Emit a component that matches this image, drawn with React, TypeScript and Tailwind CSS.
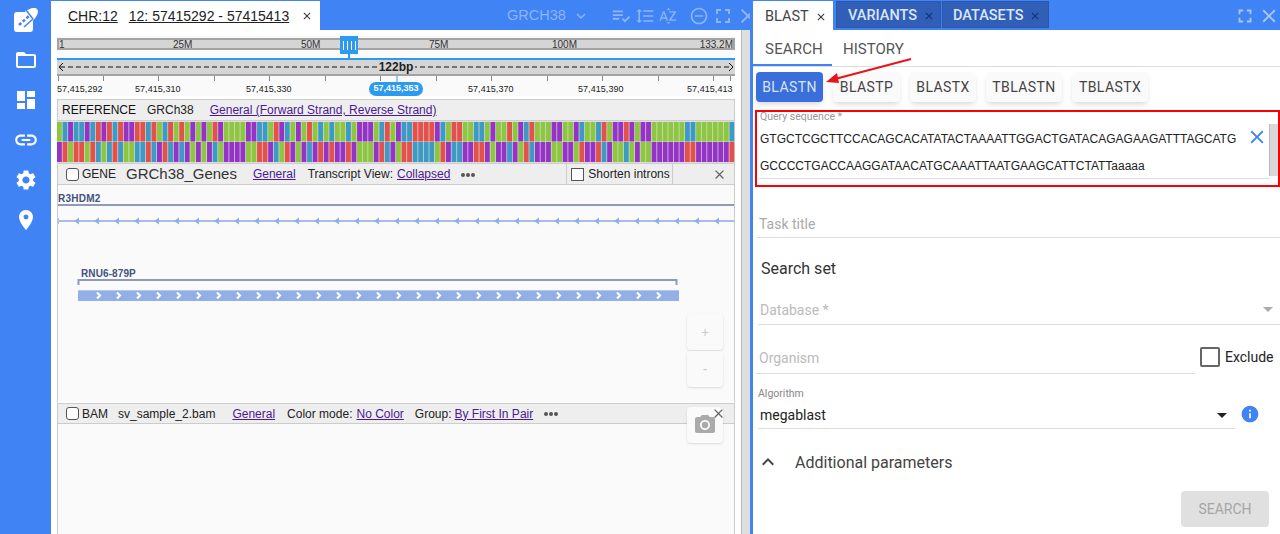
import {
  MdClose,
  MdDashboard,
  MdExpandLess,
  MdExpandMore,
  MdFolderOpen,
  MdFormatLineSpacing,
  MdFullscreen,
  MdInfo,
  MdLink,
  MdLocationOn,
  MdPhotoCamera,
  MdPlaylistAddCheck,
  MdRemoveCircleOutline,
  MdSettings,
  MdSortByAlpha,
} from "react-icons/md";

// top strand as read off the reference track, g/b/p/r
const STRAND =
  "gbpbbpbrprbrpprrbrgbrg" +
  "rgpgpgrpggggppbbgrpbgpgrgbgbggbgpp" +
  "pgbrgpbbrrrrpbgrrggbbgpggrgpbrgggp" +
  "pggpbggbrgpprpgppggggggbbggggggbg";

const BASE: Record<string, string> = {
  g: "#8dc63f",
  b: "#3d9ac4",
  p: "#9433c6",
  r: "#e4504a",
};
const COMPLEMENT: Record<string, string> = { g: "p", p: "g", b: "r", r: "b" };

const TICKS = [1, 46, 101, 157, 212, 268, 323, 379, 434, 490, 545, 601, 656, 673];
const RULER_LABELS = [
  { text: "57,415,292", left: 0 },
  { text: "57,415,310", left: 78 },
  { text: "57,415,330", left: 189 },
  { text: "57,415,370", left: 411 },
  { text: "57,415,390", left: 521 },
  { text: "57,415,413", left: 630 },
];
const MINIMAP_LABELS = [
  { text: "25M", left: 114 },
  { text: "50M", left: 242 },
  { text: "75M", left: 370 },
  { text: "100M", left: 493 },
];

const linkClass = "text-[#4a1a92] underline";

function Logo() {
  return (
    <svg width="24" height="24" viewBox="0 0 24 24" className="mt-[8px]">
      <rect x="0" y="4" width="19" height="20" rx="3" fill="#fff" />
      <path d="M11 3 L18 0 Q23 -1 24 3 Q24 6 22 9 L17 15 Z" fill="#fff" />
      <path d="M12 2 L19 11" stroke="#3f83f5" strokeWidth="1.5" />
      <path d="M5 17 L15 8" stroke="#3f83f5" strokeWidth="2.5" strokeDasharray="3 2" />
      <path d="M10 19 L19 11" stroke="#3f83f5" strokeWidth="1.5" />
    </svg>
  );
}

function Sidebar() {
  return (
    <aside className="flex w-[51px] shrink-0 flex-col items-center bg-[#3f83f5] text-white">
      <Logo />
      <MdFolderOpen size={24} className="mt-[16px]" />
      <MdDashboard size={24} className="mt-[16px]" />
      <MdLink size={26} className="mt-[15px]" />
      <MdSettings size={24} className="mt-[15px]" />
      <MdLocationOn size={24} className="mt-[16px]" />
    </aside>
  );
}

function LeftHeader() {
  return (
    <div className="flex h-[30px] shrink-0 items-end bg-[#3f83f5] pt-px">
      <div className="flex h-[29px] w-[269px] shrink-0 items-center whitespace-nowrap bg-white pl-[17px] text-sm text-[#222]">
        <span className="underline">CHR:12</span>
        <span className="ml-[11px] underline">12: 57415292 - 57415413</span>
        <MdClose size={12} className="ml-[12px] text-[#333]" />
      </div>
      <div className="flex h-[29px] min-w-0 flex-1 items-center pl-[187px] text-[#8db5f8]">
        <span className="text-[14.5px]">GRCH38</span>
        <MdExpandMore size={18} className="ml-[6px] shrink-0" />
        <MdPlaylistAddCheck size={22} className="ml-[20px] shrink-0" />
        <MdFormatLineSpacing size={20} className="ml-[3px] shrink-0" />
        <MdSortByAlpha size={20} className="ml-[3px] shrink-0" />
        <MdRemoveCircleOutline size={20} className="ml-[11px] shrink-0" />
        <MdFullscreen size={24} className="ml-[2px] shrink-0" />
        <MdClose size={24} className="ml-[1px] shrink-0" />
      </div>
    </div>
  );
}

function Minimap() {
  return (
    <div className="relative h-[22px] bg-[#fafafa]">
      <div className="absolute left-0 right-0 top-[2px] h-[12px] border-2 border-[#a3a3a3] bg-[#d5d5d5] text-[10px] leading-[9px] text-[#333]">
        <span className="absolute left-0">1</span>
        {MINIMAP_LABELS.map((l) => (
          <span key={l.text} className="absolute" style={{ left: l.left }}>
            {l.text}
          </span>
        ))}
        <span className="absolute right-0">133.2M</span>
      </div>
      <div className="absolute left-[283px] top-0 flex h-[18px] w-[18px] items-center justify-center gap-[3px] bg-[#2a9bf0]">
        <i className="h-[9px] w-px bg-white" />
        <i className="h-[9px] w-px bg-white" />
        <i className="h-[9px] w-px bg-white" />
        <i className="h-[9px] w-px bg-white" />
      </div>
      <div className="absolute left-[291px] top-[18px] h-[4px] w-[2px] bg-[#2a9bf0]" />
    </div>
  );
}

function Ruler() {
  return (
    <div className="bg-[#fafafa]">
      <div className="h-[2px] bg-[#2a9bf0]" />
      <div className="relative flex h-[16px] items-center border-b-2 border-[#a3a3a3] bg-[#d5d5d5]">
        <svg width="678" height="14" className="absolute left-0 top-0">
          <line x1="3" y1="7" x2="675" y2="7" stroke="#111" strokeDasharray="5 3" />
          <path d="M6 3 L2 7 L6 11 M672 3 L676 7 L672 11" fill="none" stroke="#111" />
        </svg>
        <span className="relative mx-auto -mt-[1px] bg-[#d5d5d5] px-[2px] text-xs font-bold leading-none text-[#222]">
          122bp
        </span>
      </div>
      <div className="relative h-[20px]">
        <svg width="678" height="6" className="absolute left-0 top-0">
          {TICKS.map((x) => (
            <line key={x} x1={x + 0.5} y1="0" x2={x + 0.5} y2="5" stroke="#888" />
          ))}
          <line x1="340" y1="0" x2="340" y2="6" stroke="#2a9bf0" />
        </svg>
        {RULER_LABELS.map((l) => (
          <span
            key={l.text}
            className="absolute top-[7px] text-[9px] leading-[13px] tracking-[0.05px] text-[#222]"
            style={{ left: l.left }}
          >
            {l.text}
          </span>
        ))}
        <span className="absolute left-[312px] top-[6px] flex h-[14px] w-[54px] items-center justify-center rounded-full bg-[#2a9bf0] text-[9px] font-bold text-white">
          57,415,353
        </span>
      </div>
    </div>
  );
}

function ReferenceTrack() {
  const cell = 678 / 122;
  return (
    <div className="mt-[3px]">
      <div className="flex h-[22px] items-center gap-[11px] border border-[#ccc] bg-[#eee] pl-[4px] text-xs text-[#111]">
        <span>REFERENCE</span>
        <span className="text-[#222]">GRCh38</span>
        <span className={`ml-[5px] ${linkClass}`}>General (Forward Strand, Reverse Strand)</span>
      </div>
      <svg width="678" height="42" className="block bg-[#ddd]">
        {STRAND.split("").map((b, i) => (
          <g key={i}>
            <rect x={i * cell} y="1" width={cell - 0.7} height="19.5" fill={BASE[b]} />
            <rect x={i * cell} y="21" width={cell - 0.7} height="20" fill={BASE[COMPLEMENT[b]]} />
          </g>
        ))}
      </svg>
    </div>
  );
}

function SmallCheckbox({ square }: { square?: boolean }) {
  return (
    <span
      className={`block h-[13px] w-[13px] shrink-0 border border-[#555] bg-white ${square ? "" : "rounded-[3px]"}`}
    />
  );
}

function Dots() {
  return (
    <span className="flex w-[14px] justify-between">
      <i className="h-[4px] w-[4px] rounded-full bg-[#555]" />
      <i className="h-[4px] w-[4px] rounded-full bg-[#555]" />
      <i className="h-[4px] w-[4px] rounded-full bg-[#555]" />
    </span>
  );
}

function GeneHeader() {
  return (
    <div className="flex h-[22px] items-center border border-[#ccc] bg-[#eee] text-xs text-[#222]">
      <span className="ml-[8px]">
        <SmallCheckbox />
      </span>
      <span className="ml-[3px]">GENE</span>
      <span className="ml-[10px] text-[15px] text-[#333]">GRCh38_Genes</span>
      <span className={`ml-[16px] ${linkClass}`}>General</span>
      <span className="ml-[12px]">Transcript View:</span>
      <span className={`ml-[4px] ${linkClass}`}>Collapsed</span>
      <span className="ml-[11px] mt-[1px]">
        <Dots />
      </span>
      <div className="ml-[91px] flex h-full w-[107px] items-center gap-[4px] border-x border-[#ccc] pl-[4px]">
        <SmallCheckbox square />
        <span>Shorten introns</span>
      </div>
      <MdClose size={15} className="ml-[39px] text-[#666]" />
    </div>
  );
}

function GeneTrack() {
  const intronMarks = Array.from({ length: 33 }, (_, i) => 19 + i * 20);
  const chevrons = Array.from({ length: 29 }, (_, i) => 41 + i * 20);
  return (
    <div className="relative h-[217px] border-x border-[#ccc] bg-[#fafafa]">
      <svg width="676" height="217" className="absolute left-0 top-0">
        <rect x="0" y="19" width="676" height="2" fill="#8e9bb8" />
        <rect x="0" y="35" width="676" height="2" fill="#a6bdea" />
        <rect x="0" y="33" width="1" height="6" fill="#a6bdea" />
        {intronMarks.map((x) => (
          <path key={x} d={`M${x - 3} 36 L${x + 2} 32.5 L${x + 2} 39.5 Z`} fill="#94afe6" />
        ))}
        <path d="M20.5 100 V95 H618.5 V100" fill="none" stroke="#8e9bb8" strokeWidth="2" />
        <rect x="20" y="105" width="601" height="11" fill="#93afe6" />
        <rect x="20" y="105" width="601" height="1" fill="#b4c8ef" />
        {chevrons.map((x) => (
          <path key={x} d={`M${x - 2} 107.5 L${x + 1} 110.5 L${x - 2} 113.5`} fill="none" stroke="#fff" strokeWidth="2" />
        ))}
      </svg>
      <span className="absolute left-0 top-[8px] text-[10px] font-bold leading-[12px] tracking-[0.25px] text-[#41527f]">
        R3HDM2
      </span>
      <span className="absolute left-[23px] top-[83px] text-[10px] font-bold leading-[12px] tracking-[0.1px] text-[#41527f]">
        RNU6-879P
      </span>
      <button className="absolute left-[629px] top-[129px] h-[36px] w-[36px] rounded bg-[#fafafa] text-sm text-[#ccc] shadow-sm">
        +
      </button>
      <button className="absolute left-[629px] top-[166px] h-[36px] w-[36px] rounded bg-[#fafafa] text-sm text-[#ccc] shadow-sm">
        -
      </button>
    </div>
  );
}

function BamTrack() {
  return (
    <div className="relative mt-px flex flex-1 flex-col">
      <div className="flex h-[21px] items-center border border-[#ccc] bg-[#eee] text-xs text-[#222]">
        <span className="ml-[8px]">
          <SmallCheckbox />
        </span>
        <span className="ml-[3px]">BAM</span>
        <span className="ml-[10px]">sv_sample_2.bam</span>
        <span className={`ml-[17px] ${linkClass}`}>General</span>
        <span className="ml-[12px]">Color mode:</span>
        <span className={`ml-[4px] ${linkClass}`}>No Color</span>
        <span className="ml-[11px]">Group:</span>
        <span className={`ml-[3px] ${linkClass}`}>By First In Pair</span>
        <span className="ml-[11px] mt-[1px]">
          <Dots />
        </span>
      </div>
      <div className="flex-1 border-x border-[#ccc] bg-[#fafafa]" />
      <button className="absolute left-[630px] top-[4px] flex h-[36px] w-[36px] items-center justify-center rounded bg-[#fafafa] shadow-sm">
        <MdPhotoCamera size={24} className="text-[#aaa]" />
      </button>
      <MdClose size={15} className="absolute left-[654px] top-[3px] text-[#666]" />
    </div>
  );
}

function LeftPanel() {
  return (
    <section className="flex w-[699px] shrink-0 flex-col font-['Liberation_Sans',Arial,sans-serif]">
      <LeftHeader />
      <div className="flex min-h-0 flex-1 bg-white">
        <div className="ml-[6px] mt-[6px] flex w-[678px] flex-col">
          <Minimap />
          <Ruler />
          <ReferenceTrack />
          <GeneHeader />
          <GeneTrack />
          <BamTrack />
        </div>
        <div className="ml-[6px] w-[9px] border-l border-[#bbb] bg-[#dedede]" />
      </div>
    </section>
  );
}

function RightHeader() {
  return (
    <div className="flex h-[30px] shrink-0 items-end bg-[#3f83f5] pl-[3px] pt-px">
      <div className="flex h-[29px] w-[80px] items-center bg-white pl-[12px] pt-[2px] text-[14.5px] text-[#444]">
        BLAST
        <MdClose size={12} className="ml-[6px] text-[#333]" />
      </div>
      <div className="ml-[3px] flex h-[27px] w-[105px] items-center self-start border border-[#2a57ad] bg-[#315fb8] pl-[11px] pt-[3px] text-[14.5px] font-medium text-[#dbe6f8]">
        VARIANTS
        <MdClose size={12} className="ml-[6px] text-[#10306e]" />
      </div>
      <div className="ml-[1px] flex h-[27px] w-[107px] items-center self-start border border-[#2a57ad] bg-[#315fb8] pl-[10px] pt-[3px] text-[14.5px] font-medium text-[#dbe6f8]">
        DATASETS
        <MdClose size={12} className="ml-[6px] text-[#10306e]" />
      </div>
      <div className="ml-auto flex h-[29px] items-center text-[#a9c7fa]">
        <MdFullscreen size={22} />
        <MdClose size={22} className="ml-[2px]" />
      </div>
    </div>
  );
}

const ALGO_BUTTONS = [
  { label: "BLASTN", width: "w-[67px]", active: true },
  { label: "BLASTP", width: "w-[67px]" },
  { label: "BLASTX", width: "w-[66px]" },
  { label: "TBLASTN", width: "w-[76px]" },
  { label: "TBLASTX", width: "w-[76px]" },
];

function RightPanel() {
  return (
    <section className="relative flex min-w-0 flex-1 flex-col border-l-[3px] border-[#3f83f5] font-['Roboto',Arial,sans-serif]">
      <div className="-ml-[3px]">
        <RightHeader />
      </div>
      <div className="flex h-[37px] items-end border-b border-[#ddd]">
        <div className="flex h-[36px] w-[79px] items-center justify-center border-b-2 border-[#3f83f5] pl-[3px] pt-[4px] text-[15px] tracking-[0.15px] text-[#555]">
          SEARCH
        </div>
        <div className="ml-[11px] flex h-[36px] items-center pt-[2px] text-[15px] text-[#555]">HISTORY</div>
      </div>
      <div className="ml-[3px] mt-[5px] flex gap-[10px]">
        {ALGO_BUTTONS.map((b) => (
          <button
            key={b.label}
            className={`h-[30px] rounded text-sm tracking-[0.4px] shadow-md ${b.width} ${
              b.active ? "bg-[#3a6edb] text-[#d7e4fa]" : "bg-[#fafafa] text-[#444]"
            }`}
          >
            {b.label}
          </button>
        ))}
      </div>
      <div className="relative ml-[2px] mt-[8px] h-[77px] border-2 border-[#f00] pl-[2px]">
        <div className="-mt-px pl-px text-[10.5px] leading-[12px] text-[#999]">Query sequence *</div>
        <div className="h-[56px] w-[511px] border-b border-[#ddd] pl-[1px] pt-[2px] font-['Liberation_Sans',Arial,sans-serif] text-xs leading-[27px] text-[#222]">
          <div className="pt-[1px]">GTGCTCGCTTCCACAGCACATATACTAAAATTGGACTGATACAGAGAAGATTTAGCATG</div>
          <div>GCCCCTGACCAAGGATAACATGCAAATTAATGAAGCATTCTATTaaaaa</div>
        </div>
        <MdClose size={22} className="absolute right-[10px] top-[14px] text-[#3f83f5]" />
        <div className="absolute right-0 top-[12px] h-[52px] w-[9px] border-l border-[#bbb] bg-[#d8d8d8]" />
      </div>
      <div className="ml-[4px] flex h-[51px] items-end border-b border-[#ddd] pb-[3px] pl-[2px] text-sm text-[#aaa]">
        Task title
      </div>
      <div className="ml-[8px] mt-[21px] text-base leading-[19px] text-[#333]">Search set</div>
      <div className="ml-[5px] mt-[23px] flex h-[24px] items-start justify-between border-b border-[#ddd] pl-[2px] pt-[1px] text-sm leading-[16px] text-[#bbb]">
        Database *
        <span className="mr-[7px] mt-[5px] h-0 w-0 border-x-[5px] border-t-[5px] border-x-transparent border-t-[#aaa]" />
      </div>
      <div className="mt-[22px] flex items-start">
        <div className="ml-[3px] flex h-[27px] w-[439px] items-start border-b border-[#ddd] pl-[3px] pt-[3px] text-sm leading-[16px] text-[#bbb]">
          Organism
        </div>
        <span className="ml-[5px] block h-[20px] w-[20px] rounded-[2px] border-2 border-[#666]" />
        <span className="ml-[5px] text-sm leading-[20px] text-[#222]">Exclude</span>
      </div>
      <div className="ml-[5px] mt-[14px] text-[10.5px] leading-[12px] text-[#888]">Algorithm</div>
      <div className="mt-[3px] flex items-center">
        <div className="ml-[5px] flex h-[26px] w-[477px] items-start justify-between border-b border-[#ddd] pl-[2px] pt-[4px] text-sm leading-[17px] text-[#222]">
          megablast
          <span className="mr-[8px] mt-[6px] h-0 w-0 border-x-[5px] border-t-[5px] border-x-transparent border-t-[#222]" />
        </div>
        <MdInfo size={20} className="ml-[5px] -mt-[5px] text-[#3f83f5]" />
      </div>
      <div className="mt-[21px] flex items-center text-base leading-[19px] text-[#444]">
        <MdExpandLess size={24} className="ml-[3px] text-[#444]" />
        <span className="ml-[15px]">Additional parameters</span>
      </div>
      <div className="mt-[17px] flex justify-end pr-[11px]">
        <button className="h-[36px] w-[88px] rounded bg-[#e0e0e0] text-sm text-[#a6a6a6]">SEARCH</button>
      </div>
      {/* annotation arrow drawn over the form */}
      <svg width="100" height="40" className="absolute left-[60px] top-[52px]">
        <path d="M98 7 L22 27" stroke="#e8141c" strokeWidth="2" />
        <path d="M13 30 L24 21 L26 31 Z" fill="#e8141c" />
      </svg>
    </section>
  );
}

export default function App() {
  return (
    <div className="flex h-[534px] w-[1280px] overflow-hidden bg-white">
      <Sidebar />
      <LeftPanel />
      <RightPanel />
    </div>
  );
}
